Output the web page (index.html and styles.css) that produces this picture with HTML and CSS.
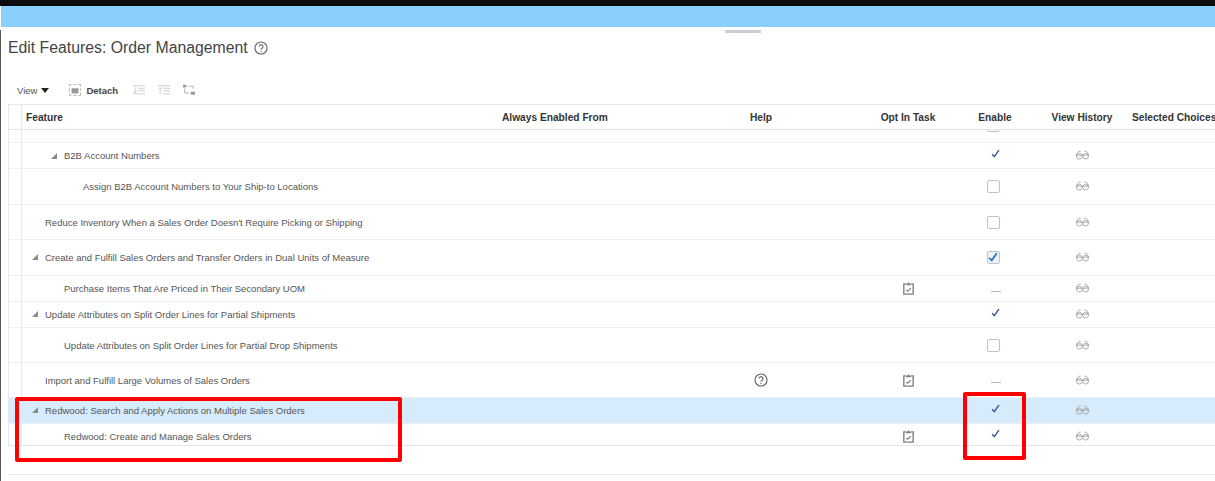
FILE: index.html
```html
<!DOCTYPE html>
<html lang="en">

<head>
  <meta charset="UTF-8">
  <meta name="viewport" content="width=device-width, initial-scale=1.0">
  <title>Edit Features: Order Management</title>
  <link rel="stylesheet" href="styles.css">
</head>

<body>
  <svg class="sprites" width="0" height="0">
    <symbol id="help" viewBox="0 0 16 16">
      <circle cx="8" cy="8" r="6.9" fill="none" stroke="currentColor" stroke-width="1.3"/>
      <path d="M5.8 6.3a2.2 2.2 0 1 1 3.4 1.9c-.8.5-1.2.9-1.2 1.8" fill="none" stroke="currentColor" stroke-width="1.3"/>
      <circle cx="8" cy="11.9" r=".8" fill="currentColor"/>
    </symbol>
    <symbol id="glasses" viewBox="0 0 14 10">
      <path d="M.6 6.200C.6 3.200 2 .7 5 .7M13.400 6.200C13.400 3.200 12 .7 9 .7" fill="none" stroke="currentColor" stroke-width="1"/>
      <ellipse cx="3.600" cy="6.300" rx="3" ry="3.100" fill="none" stroke="currentColor" stroke-width="1"/>
      <ellipse cx="10.400" cy="6.300" rx="3" ry="3.100" fill="none" stroke="currentColor" stroke-width="1"/>
      <path d="M0 5.200h14" stroke="currentColor" stroke-width="1"/>
    </symbol>
    <symbol id="task" viewBox="0 0 12 14">
      <path d="M3.500 2H.9v11.200h10.200V2H8.500" fill="none" stroke="currentColor" stroke-width="1.500"/>
      <path d="M3.500 3.500V1.800h1.500V.4h2v1.400h1.500v1.700z" fill="currentColor"/>
      <path d="M3.500 8.500 5.200 10l3.300-3.500" fill="none" stroke="currentColor" stroke-width="1.200"/>
    </symbol>
    <symbol id="tick" viewBox="0 0 10 10">
      <path d="M1.200 5.800 3.700 8.500 8.800 1.300" fill="none" stroke="currentColor" stroke-width="1.700"/>
    </symbol>
  </svg>

  <div class="topBar"></div>
  <div class="banner"></div>

  <div class="page">
    <div class="handle"></div>

    <div class="titleRow">
      <h1 class="title">Edit Features: Order Management</h1>
      <svg class="titleHelp"><use href="#help"/></svg>
    </div>

    <div class="toolbar">
      <span class="viewMenu">View</span>
      <span class="caret"></span>
      <svg class="toolIcon detachIcon" viewBox="0 0 14 14">
        <path d="M.5 3V.5H3M5 .5h3M10 .5h3.500V3M13.500 5v3M13.500 10v3.500H11M9 13.500H5M3 13.500H.5V11M.5 9V5" fill="none" stroke="#aaa" stroke-width="1"/>
        <rect x="3" y="5" width="8" height="6" fill="#999"/>
      </svg>
      <span class="detach">Detach</span>
      <svg class="toolIcon faded firstFaded" viewBox="0 0 14 12">
        <path d="M0 1h14M6 4h8M6 7h8M0 10.500h14" stroke="#c4c4c4" stroke-width="1"/>
        <path d="M2.500 3v6M.5 7l2 2 2-2" fill="none" stroke="#c4c4c4" stroke-width="1"/>
      </svg>
      <svg class="toolIcon faded" viewBox="0 0 14 12">
        <path d="M0 1h14M6 4h8M6 7h8M6 10.500h8" stroke="#c4c4c4" stroke-width="1"/>
        <path d="M2.500 11V3M.5 5l2-2 2 2" fill="none" stroke="#c4c4c4" stroke-width="1"/>
      </svg>
      <svg class="toolIcon faded" viewBox="0 0 14 12">
        <rect x="0" y="0" width="4" height="3" fill="#999"/>
        <rect x="9" y="8" width="5" height="3.500" fill="#999"/>
        <path d="M6 1.500h6v3M2 4v5.500h5" fill="none" stroke="#aaa" stroke-width="1"/>
      </svg>
    </div>

    <div class="featureTable">
      <div class="row headRow">
        <div class="gutter"></div>
        <div class="cell">Feature</div>
        <div class="cell">Always Enabled From</div>
        <div class="cell center">Help</div>
        <div class="cell center">Opt In Task</div>
        <div class="cell center">Enable</div>
        <div class="cell center">View History</div>
        <div class="cell clip">Selected Choices</div>
      </div>

      <div class="row partial">
        <div class="gutter"></div>
        <div class="cell"></div>
        <div class="cell"></div>
        <div class="cell"></div>
        <div class="cell"></div>
        <div class="cell center"><span class="box cutOff"></span></div>
        <div class="cell"></div>
        <div class="cell"></div>
      </div>

      <div class="row h26">
        <div class="gutter"></div>
        <div class="cell lvl2"><span class="twist"></span>B2B Account Numbers</div>
        <div class="cell"></div>
        <div class="cell"></div>
        <div class="cell"></div>
        <div class="cell center"><svg class="tick"><use href="#tick"/></svg></div>
        <div class="cell center"><svg class="glasses"><use href="#glasses"/></svg></div>
        <div class="cell"></div>
      </div>

      <div class="row h36">
        <div class="gutter"></div>
        <div class="cell lvl3">Assign B2B Account Numbers to Your Ship-to Locations</div>
        <div class="cell"></div>
        <div class="cell"></div>
        <div class="cell"></div>
        <div class="cell center"><span class="box"></span></div>
        <div class="cell center"><svg class="glasses"><use href="#glasses"/></svg></div>
        <div class="cell"></div>
      </div>

      <div class="row h35">
        <div class="gutter"></div>
        <div class="cell lvl0">Reduce Inventory When a Sales Order Doesn't Require Picking or Shipping</div>
        <div class="cell"></div>
        <div class="cell"></div>
        <div class="cell"></div>
        <div class="cell center"><span class="box"></span></div>
        <div class="cell center"><svg class="glasses"><use href="#glasses"/></svg></div>
        <div class="cell"></div>
      </div>

      <div class="row h36">
        <div class="gutter"></div>
        <div class="cell lvl1"><span class="twist"></span>Create and Fulfill Sales Orders and Transfer Orders in Dual Units of Measure</div>
        <div class="cell"></div>
        <div class="cell"></div>
        <div class="cell"></div>
        <div class="cell center"><span class="box checked"><svg class="boxTick"><use href="#tick"/></svg></span></div>
        <div class="cell center"><svg class="glasses"><use href="#glasses"/></svg></div>
        <div class="cell"></div>
      </div>

      <div class="row h26">
        <div class="gutter"></div>
        <div class="cell lvl2b">Purchase Items That Are Priced in Their Secondary UOM</div>
        <div class="cell"></div>
        <div class="cell"></div>
        <div class="cell center"><svg class="task"><use href="#task"/></svg></div>
        <div class="cell center"><span class="dash"></span></div>
        <div class="cell center"><svg class="glasses"><use href="#glasses"/></svg></div>
        <div class="cell"></div>
      </div>

      <div class="row h26">
        <div class="gutter"></div>
        <div class="cell lvl1"><span class="twist"></span>Update Attributes on Split Order Lines for Partial Shipments</div>
        <div class="cell"></div>
        <div class="cell"></div>
        <div class="cell"></div>
        <div class="cell center"><svg class="tick"><use href="#tick"/></svg></div>
        <div class="cell center"><svg class="glasses"><use href="#glasses"/></svg></div>
        <div class="cell"></div>
      </div>

      <div class="row h35">
        <div class="gutter"></div>
        <div class="cell lvl2b">Update Attributes on Split Order Lines for Partial Drop Shipments</div>
        <div class="cell"></div>
        <div class="cell"></div>
        <div class="cell"></div>
        <div class="cell center"><span class="box"></span></div>
        <div class="cell center"><svg class="glasses"><use href="#glasses"/></svg></div>
        <div class="cell"></div>
      </div>

      <div class="row h35">
        <div class="gutter"></div>
        <div class="cell lvl0">Import and Fulfill Large Volumes of Sales Orders</div>
        <div class="cell"></div>
        <div class="cell center"><svg class="rowHelp"><use href="#help"/></svg></div>
        <div class="cell center"><svg class="task"><use href="#task"/></svg></div>
        <div class="cell center"><span class="dash"></span></div>
        <div class="cell center"><svg class="glasses"><use href="#glasses"/></svg></div>
        <div class="cell"></div>
      </div>

      <div class="row h26 selected">
        <div class="gutter"></div>
        <div class="cell lvl1"><span class="twist"></span>Redwood: Search and Apply Actions on Multiple Sales Orders</div>
        <div class="cell"></div>
        <div class="cell"></div>
        <div class="cell"></div>
        <div class="cell center"><svg class="tick"><use href="#tick"/></svg></div>
        <div class="cell center"><svg class="glasses"><use href="#glasses"/></svg></div>
        <div class="cell"></div>
      </div>

      <div class="row h23 lastRow">
        <div class="gutter"></div>
        <div class="cell lvl2b">Redwood: Create and Manage Sales Orders</div>
        <div class="cell"></div>
        <div class="cell"></div>
        <div class="cell center"><svg class="task"><use href="#task"/></svg></div>
        <div class="cell center"><svg class="tick"><use href="#tick"/></svg></div>
        <div class="cell center"><svg class="glasses"><use href="#glasses"/></svg></div>
        <div class="cell"></div>
      </div>

      <!-- annotation boxes on top of the table -->
      <div class="redBox redLeft"></div>
      <div class="redBox redRight"></div>
    </div>

    <div class="footLine"></div>
  </div>
</body>

</html>
```

FILE: styles.css
```css
* {
  margin: 0;
  padding: 0;
  box-sizing: border-box;
}

body {
  width: 1215px;
  height: 481px;
  overflow: hidden;
  background: #fff;
  font-family: "Liberation Sans", Arial, sans-serif;
  color: #555;
}

.sprites {
  display: block;
  height: 0;
}

.topBar {
  height: 6px;
  background: #0c0c0c;
}

.banner {
  height: 21px;
  margin-left: 1px;
  background: #8ad0ff;
}

.page {
  height: 454px;
  border-left: 1px solid #555;
  padding-left: 7px;
}

.handle {
  width: 36px;
  height: 3px;
  margin: 3px 0 0 717px;
  background: #c9ced4;
}

/* title */
.titleRow {
  display: flex;
  align-items: center;
  gap: 6px;
  height: 24px;
  margin-top: 3px;
}

.title {
  font-size: 15.8px;
  font-weight: normal;
  color: #444;
}

.titleHelp {
  width: 14px;
  height: 14px;
  color: #666;
}

/* toolbar */
.toolbar {
  display: flex;
  align-items: center;
  height: 20px;
  margin-top: 20px;
  padding-left: 9px;
  font-size: 9.5px;
}

.viewMenu {
  color: #555;
}

.caret {
  width: 0;
  height: 0;
  margin-left: 4px;
  border-left: 4px solid transparent;
  border-right: 4px solid transparent;
  border-top: 5px solid #222;
}

.toolIcon {
  width: 12px;
  height: 12px;
}

.detachIcon {
  margin-left: 20px;
}

.detach {
  margin-left: 5px;
  font-weight: bold;
  color: #444;
}

.faded {
  margin-left: 13px;
}

.firstFaded {
  margin-left: 15px;
}

/* table */
.featureTable {
  position: relative;
  margin-top: 4px;
  border-top: 1px solid #e2e9f0;
}

.row {
  display: grid;
  grid-template-columns: 14px 470px 172px 194px 100px 74px 100px 90px;
  border-bottom: 1px solid #eef1f4;
  font-size: 9.5px;
}

.gutter {
  border-left: 1px solid #e2e9f0;
  border-right: 1px solid #e2e9f0;
}

.cell {
  display: flex;
  align-items: center;
  white-space: nowrap;
  min-width: 0;
}

.center {
  justify-content: center;
}

.clip {
  overflow: hidden;
}

.headRow {
  height: 25px;
  border-bottom: 1px solid #dfe7ee;
  font-size: 10.2px;
  font-weight: bold;
  color: #333;
}

.headRow .cell:nth-child(2) {
  padding-left: 4px;
}

.headRow .cell:nth-child(3) {
  padding-left: 10px;
}

.partial {
  height: 13px;
  overflow: hidden;
}

.h23 { height: 22px; }
.h26 { height: 26px; }
.h35 { height: 35px; }
.h36 { height: 36px; }

.lastRow {
  padding-top: 3px;
  border-bottom: 1px solid #dfe7ee;
}

.lastRow .gutter {
  margin-top: -3px;
}

.selected {
  background: #d6ebfc;
}

.lvl0 { padding-left: 23px; }
.lvl1 { padding-left: 10px; padding-bottom: 1px; }
.lvl2 { padding-left: 29px; }
.lvl2b { padding-left: 42px; }
.lvl3 { padding-left: 61px; }

.twist {
  width: 0;
  height: 0;
  margin-right: 7px;
  border-left: 6px solid transparent;
  border-bottom: 6px solid #8a8a8a;
}

/* cell icons */
.box {
  display: block;
  width: 13px;
  height: 13px;
  margin-right: 3px;
  border: 1.5px solid #b9c6d2;
  border-radius: 2px;
  background: #fff;
}

.cutOff {
  align-self: flex-start;
  margin-top: -11px;
}

.checked {
  background: #eef2f6;
}

.boxTick {
  display: block;
  width: 10px;
  height: 10px;
  color: #1a73d1;
}

.tick {
  width: 9px;
  height: 9px;
  margin-bottom: 5px;
  margin-left: 1px;
  color: #3f5a9c;
}

.dash {
  display: block;
  width: 10px;
  height: 1px;
  margin-top: 5px;
  margin-left: 1px;
  background: #b5b5b5;
}

.glasses {
  width: 13px;
  height: 10px;
  margin-bottom: 1px;
  color: #a6a6a6;
}

.task {
  width: 11px;
  height: 13px;
  color: #7f7f7f;
}

.rowHelp {
  width: 14px;
  height: 14px;
  margin-right: 1px;
  color: #666;
}

.redBox {
  position: absolute;
  border: 4px solid #f00;
  border-radius: 2px;
}

.redLeft {
  left: 7px;
  top: 292px;
  width: 387px;
  height: 65px;
}

.redRight {
  left: 955px;
  top: 287px;
  width: 63px;
  height: 68px;
}

.footLine {
  height: 1px;
  margin-top: 28px;
  background: #e4e8ec;
}
```
